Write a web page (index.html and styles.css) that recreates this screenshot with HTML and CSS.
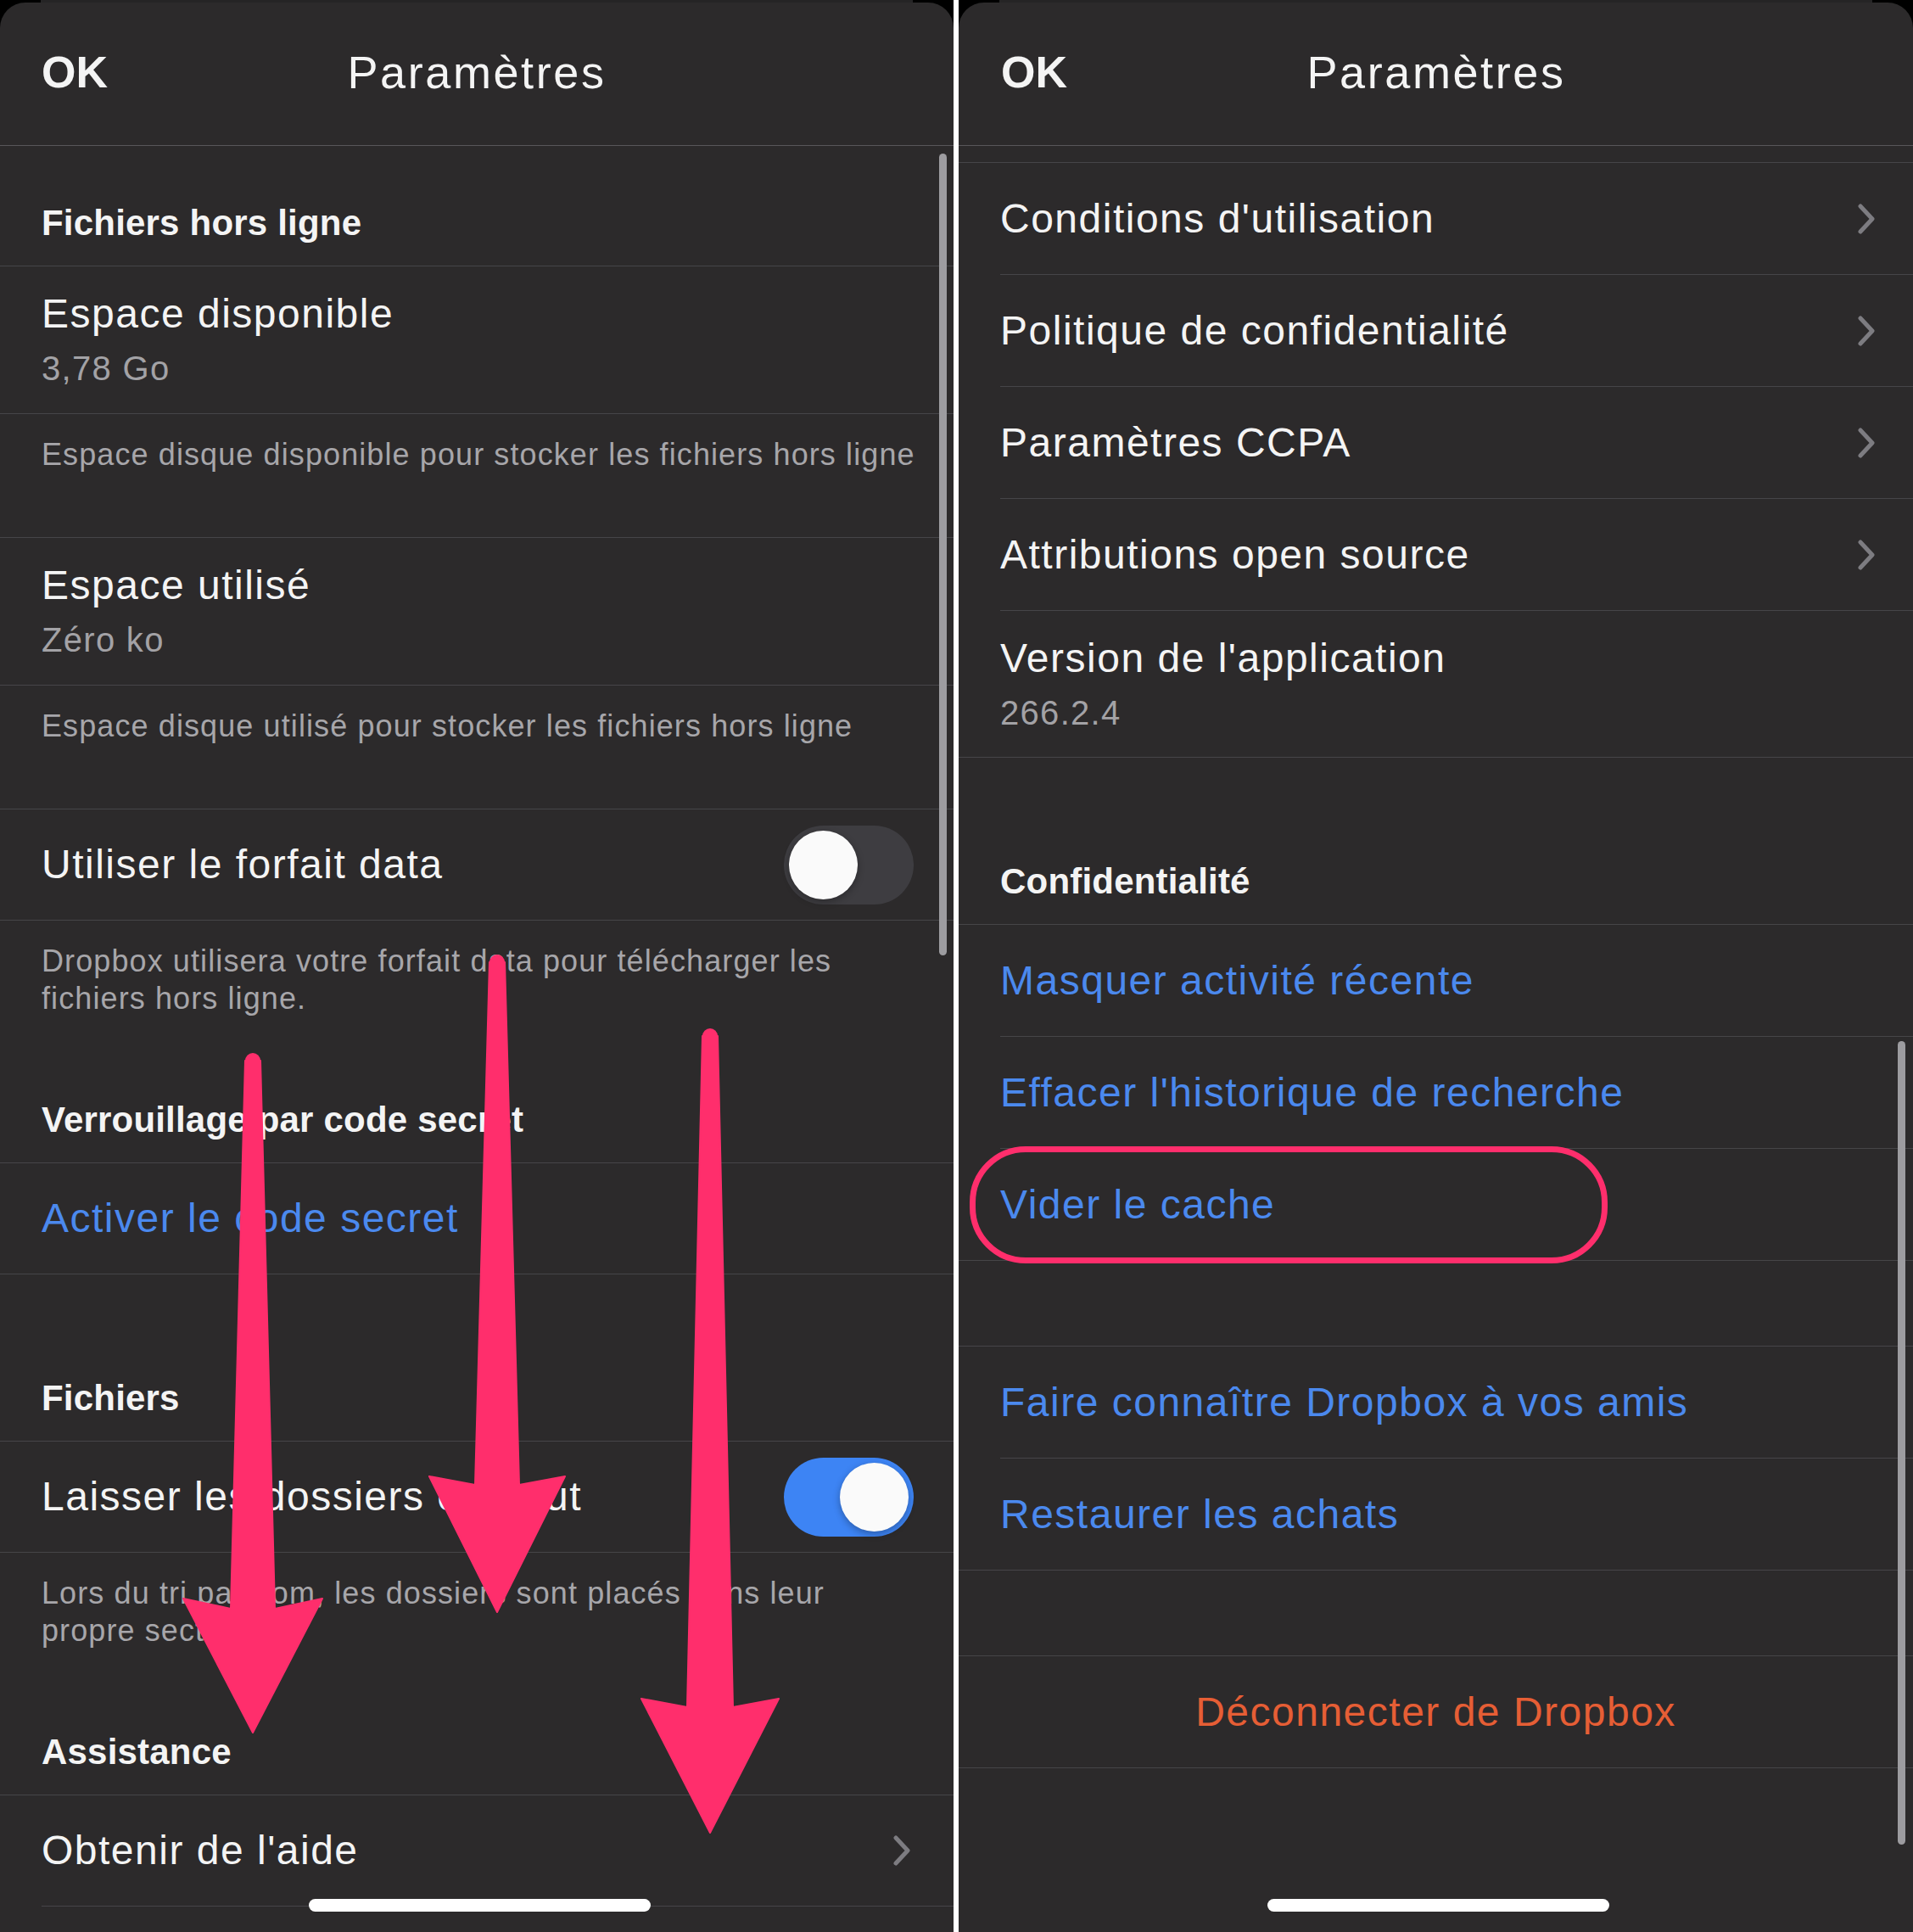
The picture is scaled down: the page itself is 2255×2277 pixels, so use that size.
FILE: index.html
```html
<!DOCTYPE html>
<html lang="fr">
<head>
<meta charset="utf-8">
<title>Paramètres</title>
<link rel="stylesheet" href="styles.css">
</head>
<body>
<div class="screen">
  <section class="col col-left">
    <div class="peek"></div>
    <div class="panel">
      <header class="nav"><span class="nav-ok">OK</span><span class="nav-title">Paramètres</span><span></span></header>
      <div class="sec-head sh-a">Fichiers hors ligne</div>
      <div class="row2 full"><div class="r-title">Espace disponible</div><div class="r-value">3,78 Go</div></div>
      <div class="note note-single">Espace disque disponible pour stocker les fichiers hors ligne</div>
      <div class="row2 full"><div class="r-title">Espace utilisé</div><div class="r-value">Zéro ko</div></div>
      <div class="note note-single">Espace disque utilisé pour stocker les fichiers hors ligne</div>
      <div class="row full"><span class="r-title">Utiliser le forfait data</span><span class="toggle"></span></div>
      <div class="note">Dropbox utilisera votre forfait data pour télécharger les<br>fichiers hors ligne.</div>
      <div class="sec-head sh-b">Verrouillage par code secret</div>
      <div class="row full"><span class="r-title link">Activer le code secret</span></div>
      <div class="sec-head sh-c">Fichiers</div>
      <div class="row full"><span class="r-title">Laisser les dossiers en haut</span><span class="toggle on"></span></div>
      <div class="note">Lors du tri par nom, les dossiers sont placés dans leur<br>propre section.</div>
      <div class="sec-head sh-b">Assistance</div>
      <div class="row inset chev-left"><span class="r-title">Obtenir de l'aide</span><svg class="chev" width="22" height="36" viewBox="0 0 22 36"><path d="M4 3 L18 18 L4 33" /></svg></div>
      <div class="scrollbar sb-left"></div>
      <div class="home"></div>
    </div>
    <svg class="arrows" width="1124" height="2277" viewBox="0 0 1124 2277">
      <g class="arrow">
        <circle cx="298" cy="1250" r="9"/>
        <polygon points="289,1250 307,1250 324,1896 380,1884 298,2042 216,1884 272,1896"/>
      </g>
      <g class="arrow">
        <circle cx="586" cy="1134" r="9"/>
        <polygon points="577,1134 595,1134 612,1750 666,1740 586,1900 506,1740 560,1750"/>
      </g>
      <g class="arrow">
        <circle cx="837" cy="1221" r="9"/>
        <polygon points="828,1221 846,1221 864,2012 918,2002 837,2160 756,2002 810,2012"/>
      </g>
    </svg>
  </section>
  <div class="divider"></div>
  <section class="col col-right">
    <div class="peek"></div>
    <div class="panel panel-right">
      <header class="nav"><span class="nav-ok">OK</span><span class="nav-title">Paramètres</span><span></span></header>
      <div class="gap gap-top"></div>
      <div class="row inset"><span class="r-title">Conditions d'utilisation</span><svg class="chev" width="22" height="36" viewBox="0 0 22 36"><path d="M4 3 L18 18 L4 33" /></svg></div>
      <div class="row inset"><span class="r-title">Politique de confidentialité</span><svg class="chev" width="22" height="36" viewBox="0 0 22 36"><path d="M4 3 L18 18 L4 33" /></svg></div>
      <div class="row inset"><span class="r-title">Paramètres CCPA</span><svg class="chev" width="22" height="36" viewBox="0 0 22 36"><path d="M4 3 L18 18 L4 33" /></svg></div>
      <div class="row inset"><span class="r-title">Attributions open source</span><svg class="chev" width="22" height="36" viewBox="0 0 22 36"><path d="M4 3 L18 18 L4 33" /></svg></div>
      <div class="row2 full v173"><div class="r-title">Version de l'application</div><div class="r-value">266.2.4</div></div>
      <div class="sec-head sh-c">Confidentialité</div>
      <div class="row inset"><span class="r-title link">Masquer activité récente</span></div>
      <div class="row inset"><span class="r-title link">Effacer l'historique de recherche</span></div>
      <div class="row full"><span class="r-title link">Vider le cache</span></div>
      <div class="gap gap-100"></div>
      <div class="row inset"><span class="r-title link">Faire connaître Dropbox à vos amis</span></div>
      <div class="row full"><span class="r-title link">Restaurer les achats</span></div>
      <div class="gap gap-100"></div>
      <div class="row full center"><span class="r-title danger">Déconnecter de Dropbox</span></div>
      <div class="highlight"></div>
      <div class="scrollbar sb-right"></div>
      <div class="home"></div>
    </div>
  </section>
</div>
</body>
</html>
```
FILE: styles.css
```css
* { box-sizing: border-box; margin: 0; padding: 0; }
html, body { background: #000; }
body {
  width: 2255px;
  height: 2277px;
  overflow: hidden;
  font-family: "Liberation Sans", Arial, sans-serif;
  color: #f4f4f4;
}
.screen { display: flex; height: 2277px; }
.col { position: relative; display: flex; flex-direction: column; }
.col-left { width: 1124px; }
.col-right { width: 1125px; }
.divider { width: 6px; background: #fff; }
.peek { height: 3px; margin: 0 48px; background: #252425; flex: none; }
.panel {
  position: relative;
  flex: 1;
  background: #2c2a2b;
  border-radius: 30px 30px 0 0;
  overflow: hidden;
}
.nav {
  height: 169px;
  display: grid;
  grid-template-columns: 1fr auto 1fr;
  align-items: center;
  padding: 0 49px 4px;
  border-bottom: 1px solid #58575a;
}
.panel-right .nav { padding-left: 50px; }
.nav-ok { font-weight: 700; font-size: 52px; }
.nav-title { font-size: 54px; letter-spacing: 2.6px; }

.sec-head {
  display: flex;
  align-items: flex-end;
  padding: 0 49px 25px;
  font-weight: 700;
  font-size: 42px;
  line-height: 50px;
  letter-spacing: 0.2px;
  border-bottom: 1px solid #464548;
}
.sh-a { height: 142px; }
.sh-b { height: 172px; }
.sh-c { height: 197px; }

.row {
  height: 131px;
  display: flex;
  align-items: center;
  justify-content: space-between;
  border-bottom: 1px solid #464548;
}
.panel-right .row { height: 132px; }
.full { padding-left: 49px; }
.inset { margin-left: 49px; }
.center { justify-content: center; padding-left: 0; }

.r-title { font-size: 48px; line-height: 60px; letter-spacing: 1.5px; white-space: nowrap; }
.link { color: #4b89ee; }
.danger { color: #e65e35; }
.r-value { font-size: 40px; line-height: 52px; margin-top: 8px; letter-spacing: 1.3px; color: #a3a2a6; }

.row2 {
  height: 174px;
  padding-top: 26px;
  display: flex;
  flex-direction: column;
  border-bottom: 1px solid #464548;
}
.v173 { height: 173px; }

.note {
  padding: 26px 49px 0;
  font-size: 36px;
  line-height: 44px;
  letter-spacing: 1.1px;
  color: #a7a6aa;
  white-space: nowrap;
}
.note-single { padding-bottom: 75px; border-bottom: 1px solid #464548; }

.gap { border-bottom: 1px solid #464548; }
.gap-top { height: 20px; }
.gap-100 { height: 101px; }

.toggle {
  position: relative;
  width: 153px;
  height: 93px;
  border-radius: 47px;
  background: #3e3d41;
  margin-right: 47px;
  flex: none;
}
.toggle::after {
  content: "";
  position: absolute;
  top: 6px;
  left: 6px;
  width: 81px;
  height: 81px;
  border-radius: 50%;
  background: #fafafa;
  box-shadow: 0 3px 8px rgba(0, 0, 0, 0.3);
}
.toggle.on { background: #3d84f4; }
.toggle.on::after { left: 66px; }

.chev { flex: none; margin-right: 44px; }
.chev-left .chev { margin-right: 50px; }
.chev path { fill: none; stroke: #7d7c81; stroke-width: 5; stroke-linecap: round; stroke-linejoin: round; }

.scrollbar { position: absolute; width: 9px; border-radius: 5px; background: #9d9ca0; }
.sb-left { left: 1107px; top: 178px; height: 945px; }
.sb-right { left: 1107px; top: 1224px; height: 947px; }

.home {
  position: absolute;
  left: 364px;
  bottom: 24px;
  width: 403px;
  height: 15px;
  border-radius: 8px;
  background: #fff;
}

.highlight {
  position: absolute;
  left: 13px;
  top: 1348px;
  width: 752px;
  height: 138px;
  border: 7px solid #ff2e6c;
  border-radius: 66px;
}

.arrows { position: absolute; left: 0; top: 0; pointer-events: none; }
.arrow circle, .arrow polygon { fill: #ff2e6c; }
.arrow polygon { stroke: #ff2e6c; stroke-width: 2; stroke-linejoin: round; }
```
